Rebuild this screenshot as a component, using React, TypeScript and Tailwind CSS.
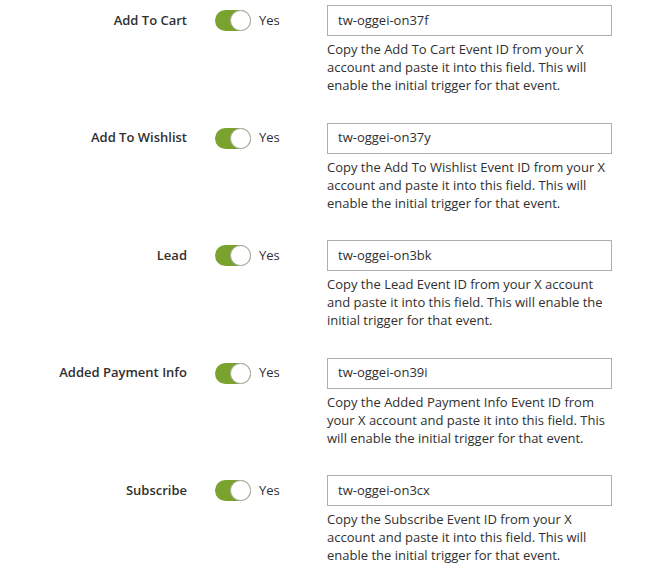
const rows = [
  { label: "Add To Cart", value: "tw-oggei-on37f" },
  { label: "Add To Wishlist", value: "tw-oggei-on37y" },
  { label: "Lead", value: "tw-oggei-on3bk" },
  { label: "Added Payment Info", value: "tw-oggei-on39i" },
  { label: "Subscribe", value: "tw-oggei-on3cx" },
];

function Toggle() {
  return (
    <span className="relative flex h-[21px] w-[36px] items-center rounded-full bg-[#79a22e]">
      <span className="absolute right-0 top-0 h-[21px] w-[21px] rounded-full border border-[#adadad] bg-white" />
    </span>
  );
}

export default function App() {
  return (
    <div className="bg-white pt-[5px] text-[#303030]" style={{ fontFamily: '"Open Sans", "Noto Sans", sans-serif' }}>
      {rows.map((r) => (
        <div key={r.label} className="flex items-start pb-[28.5px]">
          <div className="flex h-[31px] w-[187px] items-center justify-end text-[13px] font-semibold">{r.label}</div>
          <div className="ml-[28px] flex h-[31px] w-[112px] items-center gap-[8px]">
            <Toggle />
            <span className="text-[13px]">Yes</span>
          </div>
          <div className="w-[285px]">
            <div className="flex h-[31px] items-center border border-[#adadad] px-[10px] text-[13px]">{r.value}</div>
            <p className="mt-[4px] text-[13px] leading-[18px]">
              Copy the {r.label} Event ID from your X account and paste it into this field. This will enable the initial trigger for that event.
            </p>
          </div>
        </div>
      ))}
    </div>
  );
}
